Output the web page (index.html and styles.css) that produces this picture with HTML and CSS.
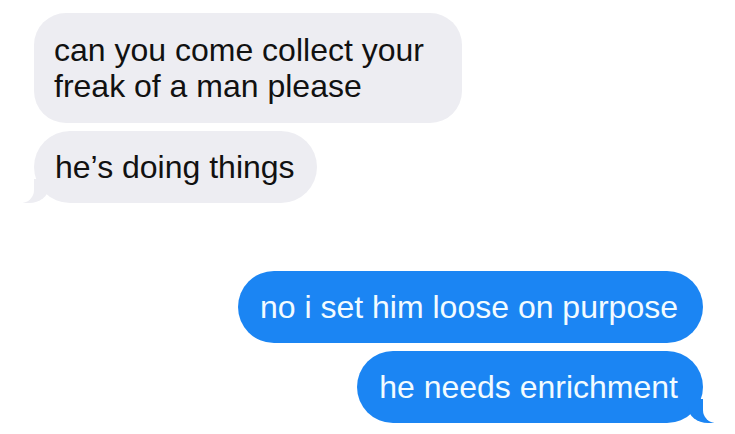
FILE: index.html
```html
<!DOCTYPE html>
<html lang="en">
<head>
    <meta charset="UTF-8">
    <meta name="viewport" content="width=device-width, initial-scale=1.0">
    <title>Messages</title>
    <link rel="stylesheet" href="styles.css">
</head>
<body>
    <div class="thread">
        <div class="group them">
            <div class="bubble gray wide">can you come collect your freak of a man please</div>
            <div class="bubble gray tail">he’s doing things</div>
        </div>

        <div class="group me">
            <div class="bubble blue">no i set him loose on purpose</div>
            <div class="bubble blue tail">he needs enrichment</div>
        </div>
    </div>
</body>
</html>
```

FILE: styles.css
```css
* {
    box-sizing: border-box;
}

body {
    margin: 0;
    padding: 0;
    background-color: #fff;
    font-family: 'Liberation Sans', Arial, sans-serif;
}

.thread {
    display: flex;
    flex-direction: column;
    gap: 68px;
    padding: 13px 32px 0 34px;
}

.group {
    display: flex;
    flex-direction: column;
    gap: 8px;
}

.them {
    align-items: flex-start;
}

.me {
    align-items: flex-end;
}

.bubble {
    position: relative;
    font-size: 32px;
    line-height: 36px;
    padding: 18px 23px;
    border-radius: 36px;
}

.gray {
    background-color: #ededf2;
    color: #111;
}

.gray.wide {
    width: 428px;
    padding: 19px 20px;
    border-radius: 32px;
}

.gray.tail {
    padding: 18px 22px 18px 21px;
}

.blue {
    background-color: #1b85f3;
    color: #f2fbff;
    padding: 18px 25px 18px 22px;
}

/* tails */
.tail::before,
.tail::after {
    content: '';
    position: absolute;
    bottom: 0;
    height: 24px;
}

.gray.tail::before {
    left: -11px;
    width: 26px;
    background-color: #ededf2;
    border-bottom-right-radius: 20px 16px;
}

.gray.tail::after {
    left: -30px;
    width: 30px;
    background-color: #fff;
    border-bottom-right-radius: 13px;
}

.blue.tail::before {
    right: -11px;
    width: 26px;
    background-color: #1b85f3;
    border-bottom-left-radius: 20px 16px;
}

.blue.tail::after {
    right: -30px;
    width: 30px;
    background-color: #fff;
    border-bottom-left-radius: 13px;
}
```
